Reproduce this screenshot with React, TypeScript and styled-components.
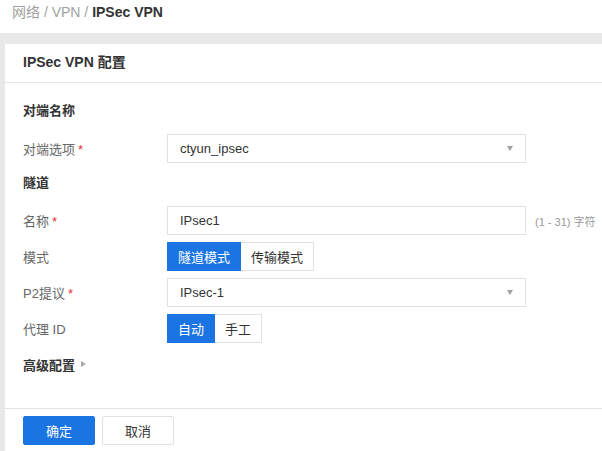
import React, { useState } from 'react';
import styled, { createGlobalStyle } from 'styled-components';

const GlobalStyle = createGlobalStyle`
  html, body {
    margin: 0;
    padding: 0;
    background: #fff;
    font-family: "Liberation Sans", Arial, "Noto Sans CJK SC", sans-serif;
    font-size: 13px;
    color: #333;
  }
  * { box-sizing: border-box; }
`;

const BLUE = '#1a74e2';

export default function App() {
  const [mode, setMode] = useState('tunnel');
  const [proxy, setProxy] = useState('auto');

  return (
    <Page>
      <GlobalStyle />
      <Breadcrumb>
        <Crumb>网络 / VPN / </Crumb>
        <CrumbCurrent>IPSec VPN</CrumbCurrent>
      </Breadcrumb>
      <Content>
        <Panel>
          <PanelHeader>IPSec VPN 配置</PanelHeader>
          <PanelBody>
            <SectionTitle>对端名称</SectionTitle>
            <Row>
              <Label>
                对端选项<Required>*</Required>
              </Label>
              <Select>
                <span>ctyun_ipsec</span>
                <Caret />
              </Select>
            </Row>

            <SectionTitle $top={3}>隧道</SectionTitle>
            <Row>
              <Label>
                名称<Required>*</Required>
              </Label>
              <Input defaultValue="IPsec1" />
              <Hint>(1 - 31) 字符</Hint>
            </Row>
            <Row>
              <Label>模式</Label>
              <Toggle>
                <ToggleBtn $active={mode === 'tunnel'} onClick={() => setMode('tunnel')}>
                  隧道模式
                </ToggleBtn>
                <ToggleBtn $active={mode === 'transport'} onClick={() => setMode('transport')}>
                  传输模式
                </ToggleBtn>
              </Toggle>
            </Row>
            <Row>
              <Label>
                P2提议<Required>*</Required>
              </Label>
              <Select>
                <span>IPsec-1</span>
                <Caret />
              </Select>
            </Row>
            <Row>
              <Label>代理 ID</Label>
              <Toggle>
                <ToggleBtn $active={proxy === 'auto'} onClick={() => setProxy('auto')}>
                  自动
                </ToggleBtn>
                <ToggleBtn $active={proxy === 'manual'} onClick={() => setProxy('manual')}>
                  手工
                </ToggleBtn>
              </Toggle>
            </Row>

            <Advanced>
              高级配置
              <ArrowRight />
            </Advanced>
          </PanelBody>
          <Footer>
            <Button $primary>确定</Button>
            <Button>取消</Button>
          </Footer>
        </Panel>
      </Content>
    </Page>
  );
}

const Page = styled.div`
  width: 602px;
  height: 451px;
  overflow: hidden;
  display: flex;
  flex-direction: column;
`;

const Breadcrumb = styled.div`
  height: 33px;
  padding-left: 12px;
  line-height: 24px;
  font-size: 14px;
`;

const Crumb = styled.span`
  color: #a0a0a0;
`;

const CrumbCurrent = styled.span`
  color: #333;
  font-weight: bold;
`;

const Content = styled.div`
  flex: 1;
  background: #e8e8e8;
  padding: 11px 0 0 5px;
  display: flex;
`;

const Panel = styled.div`
  flex: 1;
  background: #fff;
  display: flex;
  flex-direction: column;
`;

const PanelHeader = styled.div`
  height: 39px;
  line-height: 37px;
  padding-left: 18px;
  font-size: 14px;
  font-weight: bold;
  color: #333;
  border-bottom: 1px solid #e3e3e3;
`;

const PanelBody = styled.div`
  height: 325px;
  padding: 18px 0 0 18px;
  display: flex;
  flex-direction: column;
`;

const SectionTitle = styled.div<{ $top?: number }>`
  height: 20px;
  line-height: 20px;
  margin-top: ${(p) => p.$top ?? 0}px;
  margin-bottom: 13px;
  font-weight: bold;
  color: #333;
`;

const Row = styled.div`
  display: flex;
  align-items: center;
  height: 29px;
  margin-bottom: 7px;
`;

const Label = styled.div`
  width: 144px;
  color: #666;
`;

const Required = styled.span`
  color: #e5312f;
  margin-left: 3px;
`;

const Select = styled.div`
  width: 359px;
  height: 29px;
  border: 1px solid #e1e1e1;
  padding: 0 12px 0 12px;
  display: flex;
  align-items: center;
  justify-content: space-between;
  color: #333;
`;

const Caret = styled.span`
  width: 0;
  height: 0;
  border-left: 3.5px solid transparent;
  border-right: 3.5px solid transparent;
  border-top: 5px solid #a0a0a0;
`;

const Input = styled.input`
  width: 359px;
  height: 29px;
  border: 1px solid #e1e1e1;
  padding: 0 12px;
  font: inherit;
  color: #333;
  outline: none;
`;

const Hint = styled.span`
  margin-left: 9px;
  font-size: 11px;
  color: #999;
`;

const Toggle = styled.div`
  display: flex;
  height: 29px;
`;

const ToggleBtn = styled.button<{ $active?: boolean }>`
  height: 29px;
  padding: 0 10px;
  font: inherit;
  cursor: pointer;
  background: ${(p) => (p.$active ? BLUE : '#fff')};
  color: ${(p) => (p.$active ? '#fff' : '#333')};
  border: 1px solid ${(p) => (p.$active ? BLUE : '#e1e1e1')};
  & + & {
    border-left: none;
  }
`;

const Advanced = styled.div`
  display: flex;
  align-items: center;
  height: 20px;
  margin-top: 4px;
  font-weight: bold;
  color: #333;
`;

const ArrowRight = styled.span`
  margin-left: 6px;
  width: 0;
  height: 0;
  border-top: 3.5px solid transparent;
  border-bottom: 3.5px solid transparent;
  border-left: 5px solid #aaa;
`;

const Footer = styled.div`
  border-top: 1px solid #e3e3e3;
  padding: 7px 0 0 18px;
  display: flex;
  gap: 7px;
`;

const Button = styled.button<{ $primary?: boolean }>`
  width: 72px;
  height: 29px;
  border-radius: 2px;
  font: inherit;
  cursor: pointer;
  background: ${(p) => (p.$primary ? BLUE : '#fff')};
  color: ${(p) => (p.$primary ? '#fff' : '#333')};
  border: 1px solid ${(p) => (p.$primary ? BLUE : '#e1e1e1')};
`;
